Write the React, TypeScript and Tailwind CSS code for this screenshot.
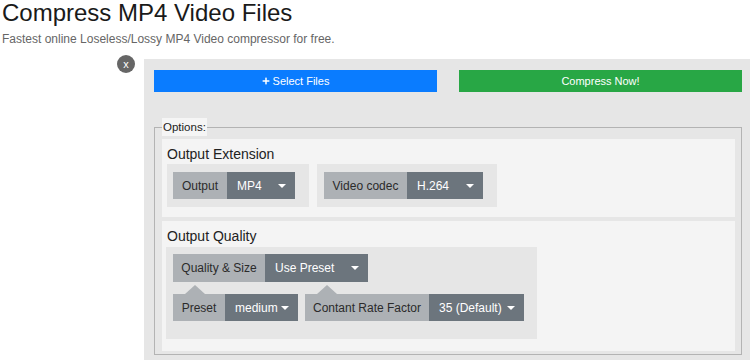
import React from "react";
import { FaPlus } from "react-icons/fa";

const Caret = () => (
  <span className="inline-block w-0 h-0 border-x-[4px] border-t-[4px] border-x-transparent border-t-white" />
);

interface PickProps {
  label: string;
  value: string;
  labelW: string;
  selectW: string;
  arrow?: boolean;
  tall?: boolean;
}

const Pick: React.FC<PickProps> = ({ label, value, labelW, selectW, arrow, tall }) => {
  return (
    <div className={`flex text-[12px] ${tall ? "h-[28px]" : "h-[27px]"}`}>
      <div
        className={`relative flex items-center justify-center bg-[#adb1b5] text-[#2b2b2b] ${labelW}`}
      >
        {arrow && (
          <span className="absolute left-[12px] top-[-9px] w-0 h-0 border-x-[10px] border-b-[9px] border-x-transparent border-b-[#adb1b5]" />
        )}
        {label}
      </div>
      <div
        className={`flex items-center justify-between pl-[10px] pr-[9px] bg-[#6c757d] text-white ${selectW}`}
      >
        <span>{value}</span>
        <Caret />
      </div>
    </div>
  );
};

export default function App() {
  return (
    <div
      className="bg-white text-[#222] h-[360px] overflow-hidden"
      style={{ fontFamily: '"Liberation Sans", Arial, sans-serif' }}
    >
      <div className="pl-[2px]">
        <h1 className="text-[24px] leading-[26px] text-[#1a1a1a]">Compress MP4 Video Files</h1>
        <p className="mt-[5px] text-[12px] leading-[16px] text-[#666]">
          Fastest online Loseless/Lossy MP4 Video compressor for free.
        </p>
      </div>

      <div className="flex items-start mt-[8px]">
        <div className="ml-[117px] w-[18px] h-[18px] rounded-full bg-[#666] text-white text-[11px] leading-[18px] text-center">
          x
        </div>
        <div className="ml-[9px] mt-[4px] flex-1 bg-[#e6e6e6] pt-[11px] pl-[10px] pr-[8px] h-[301px]">
          {/* Buttons */}
          <div className="grid grid-cols-2 gap-[22px]">
            <button className="h-[22px] bg-[#0a7cff] text-white text-[11px] flex items-center justify-center gap-[3px]">
              <FaPlus size={8} />
              Select Files
            </button>
            <button className="h-[22px] bg-[#28a745] text-white text-[11px]">Compress Now!</button>
          </div>

          {/* Options */}
          <fieldset className="mt-[26px] border border-[#b3b3b3] pl-[7px] pr-[6px] pt-[3px] pb-[3px]">
            <legend className="bg-[#f5f5f5] text-[11.5px] leading-[18px] px-[1px] text-[#222]">
              Options:
            </legend>

            <div className="bg-[#f4f4f4] pt-[6px] pb-[10px] px-[5px]">
              <div className="text-[14px] leading-[18px]">Output Extension</div>
              <div className="mt-[1px] flex gap-[8px]">
                <div className="bg-[#e6e6e6] pl-[6px] pr-[14px] py-[8px]">
                  <Pick label="Output" value="MP4" labelW="w-[54px]" selectW="w-[68px]" />
                </div>
                <div className="bg-[#e6e6e6] pl-[7px] pr-[14px] py-[8px]">
                  <Pick label="Video codec" value="H.264" labelW="w-[83px]" selectW="w-[76px]" />
                </div>
              </div>
            </div>

            <div className="mt-[4px] bg-[#f4f4f4] pt-[6px] pb-[12px] pl-[4px] pr-[5px]">
              <div className="text-[14px] leading-[18px] pl-[1px]">Output Quality</div>
              <div className="mt-[2px] w-[371px] bg-[#e6e6e6] pl-[7px] pt-[7px] pb-[18px]">
                <Pick
                  label="Quality & Size"
                  value="Use Preset"
                  labelW="w-[92px]"
                  selectW="w-[103px]"
                  tall
                />
                <div className="mt-[12px] flex gap-[7px]">
                  <Pick label="Preset" value="medium" labelW="w-[52px]" selectW="w-[73px]" arrow />
                  <Pick
                    label="Contant Rate Factor"
                    value="35 (Default)"
                    labelW="w-[124px]"
                    selectW="w-[95px]"
                    arrow
                  />
                </div>
              </div>
            </div>
          </fieldset>
        </div>
      </div>
    </div>
  );
}
